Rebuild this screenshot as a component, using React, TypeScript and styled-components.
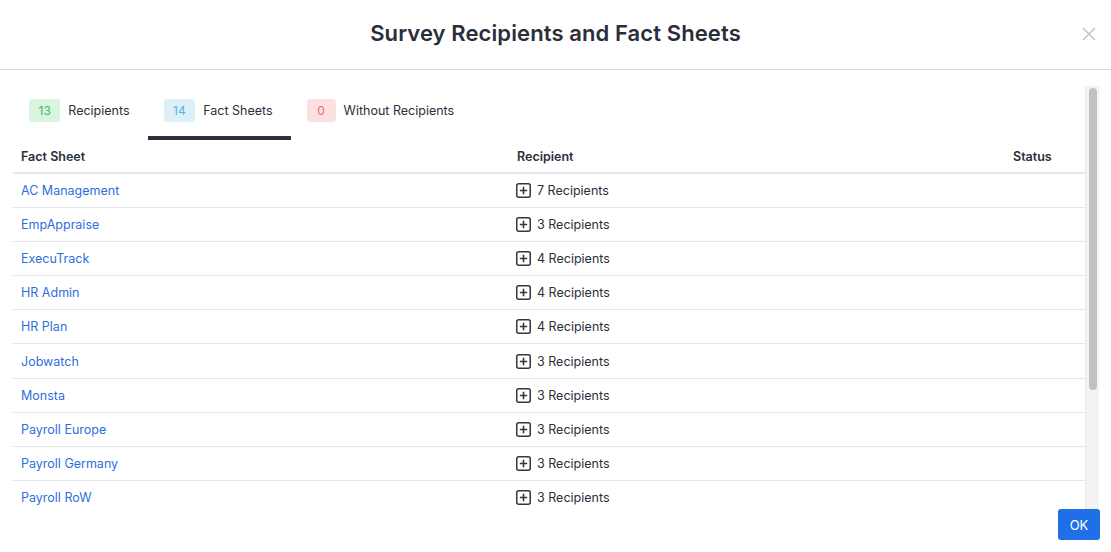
import { FC } from "react";
import styled, { createGlobalStyle } from "styled-components";

const GlobalStyle = createGlobalStyle`
  html, body {
    margin: 0;
    padding: 0;
    background: #ffffff;
    font-family: Inter, "Noto Sans", sans-serif;
    color: #2b2f3b;
  }
`;

interface Row {
  name: string;
  count: number;
}

const rows: Row[] = [
  { name: "AC Management", count: 7 },
  { name: "EmpAppraise", count: 3 },
  { name: "ExecuTrack", count: 4 },
  { name: "HR Admin", count: 4 },
  { name: "HR Plan", count: 4 },
  { name: "Jobwatch", count: 3 },
  { name: "Monsta", count: 3 },
  { name: "Payroll Europe", count: 3 },
  { name: "Payroll Germany", count: 3 },
  { name: "Payroll RoW", count: 3 },
  { name: "Recruit Pro", count: 2 },
  { name: "Talent Hub", count: 3 },
  { name: "TimeKeeper", count: 2 },
  { name: "Workforce Plus", count: 3 },
];

type Tone = "green" | "blue" | "red";

const tones: Record<Tone, { bg: string; fg: string }> = {
  green: { bg: "#d9f5df", fg: "#3dba5c" },
  blue: { bg: "#ddf0f8", fg: "#5bb3da" },
  red: { bg: "#fde0e1", fg: "#ef6a6a" },
};

const Modal = styled.div`
  position: relative;
  width: 1111px;
  height: 552px;
  overflow: hidden;
  background: #fff;
`;

const Header = styled.div`
  height: 69px;
  border-bottom: 1px solid #d7d9e0;
  display: flex;
  align-items: center;
  justify-content: center;
  position: relative;
`;

const Title = styled.h1`
  margin: -3px 0 0;
  font-size: 22px;
  font-weight: 600;
  color: #2a2e3b;
  letter-spacing: 0.1px;
`;

const Close = styled.button`
  position: absolute;
  right: 14px;
  top: 26px;
  width: 16px;
  height: 16px;
  padding: 0;
  border: 0;
  background: none;
  display: flex;
`;

const Body = styled.div`
  margin: 16px 12px 0 13px;
  height: 428px;
  display: flex;
`;

/* scrolled list; the rows past Payroll RoW sit below the fold */
const ScrollArea = styled.div`
  flex: 1;
  overflow: hidden;
`;

const Track = styled.div`
  width: 14px;
  background: #f3f3f3;
  border-left: 1px solid #ebebeb;
  box-sizing: border-box;
  padding: 2px 2px 0 3px;
`;

const Thumb = styled.div`
  height: 302px;
  background: #c1c1c1;
  border-radius: 4px;
`;

const Tabs = styled.div`
  display: flex;
`;

const Tab = styled.div<{ $active?: boolean }>`
  display: flex;
  align-items: center;
  gap: 8px;
  padding: 13px 18px 14px 16px;
  border-bottom: 4px solid ${(p) => (p.$active ? "#2c303e" : "transparent")};
  font-size: 12.5px;
  color: #2b2f3b;
`;

const Badge = styled.span<{ $tone: Tone }>`
  height: 23px;
  min-width: 10px;
  padding: 0 9.5px;
  border-radius: 3px;
  display: inline-flex;
  align-items: center;
  justify-content: center;
  font-size: 12px;
  background: ${(p) => tones[p.$tone].bg};
  color: ${(p) => tones[p.$tone].fg};
`;

const Grid = styled.div<{ $head?: boolean }>`
  display: grid;
  grid-template-columns: 496px 1fr 80px;
  align-items: center;
  height: ${(p) => (p.$head ? "32px" : "33.1px")};
  border-bottom: ${(p) => (p.$head ? "2px solid #e3e6ea" : "1px solid #e3e5ea")};
  font-size: 12.5px;
  font-weight: ${(p) => (p.$head ? 600 : 400)};
`;

const Cell = styled.div`
  padding: 0 8px;
  display: flex;
  align-items: center;
  gap: 6px;
`;

const LinkText = styled.a`
  color: #2f6fdc;
  text-decoration: none;
  cursor: pointer;
`;

const Count = styled.span`
  color: #2b2f3b;
`;

const OkButton = styled.button`
  position: absolute;
  right: 11px;
  bottom: 12px;
  width: 42px;
  height: 31px;
  border: 0;
  border-radius: 3px;
  background: #1f6fe6;
  color: #fff;
  font-family: Inter, "Noto Sans", sans-serif;
  font-size: 13px;
  padding: 0;
`;

const PlusBox: FC = () => (
  <svg width="15" height="15" viewBox="0 0 15 15" fill="none" style={{ marginLeft: -1 }}>
    <rect x="0.75" y="0.75" width="13.5" height="13.5" rx="2" stroke="#33363f" strokeWidth="1.5" />
    <path d="M7.5 3.8v7.4M3.8 7.5h7.4" stroke="#33363f" strokeWidth="1.6" />
  </svg>
);

const App: FC = () => {
  return (
    <>
      <GlobalStyle />
      <Modal>
        <Header>
          <Title>Survey Recipients and Fact Sheets</Title>
          <Close aria-label="close">
            <svg width="16" height="16" viewBox="0 0 16 16">
              <path d="M2 2l12 12M14 2L2 14" stroke="#c3c7d3" strokeWidth="1.6" />
            </svg>
          </Close>
        </Header>
        <Body>
          <ScrollArea>
            <Tabs>
              <Tab>
                <Badge $tone="green">13</Badge>
                Recipients
              </Tab>
              <Tab $active>
                <Badge $tone="blue">14</Badge>
                Fact Sheets
              </Tab>
              <Tab>
                <Badge $tone="red">0</Badge>
                Without Recipients
              </Tab>
            </Tabs>
            <Grid $head>
              <Cell>Fact Sheet</Cell>
              <Cell>Recipient</Cell>
              <Cell>Status</Cell>
            </Grid>
            {rows.map((r) => (
              <Grid key={r.name}>
                <Cell>
                  <LinkText>{r.name}</LinkText>
                </Cell>
                <Cell>
                  <PlusBox />
                  <Count>{r.count} Recipients</Count>
                </Cell>
                <Cell />
              </Grid>
            ))}
          </ScrollArea>
          <Track>
            <Thumb />
          </Track>
        </Body>
        <OkButton>OK</OkButton>
      </Modal>
    </>
  );
};

export default App;
